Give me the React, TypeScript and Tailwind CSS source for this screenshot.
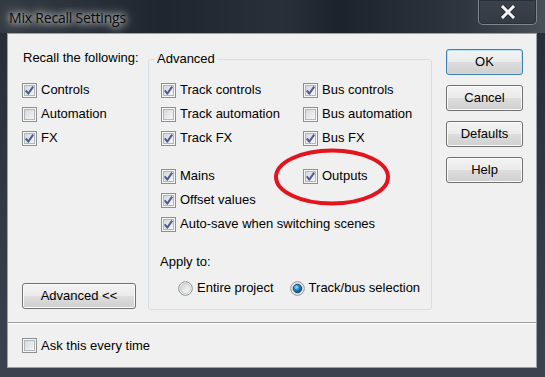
import React from 'react';

const CheckBox = ({ checked }: { checked: boolean }) => (
  <svg width="15" height="15" viewBox="0 0 15 15" className="shrink-0">
    <defs>
      <linearGradient id="cbInner" x1="0" y1="0" x2="1" y2="1">
        <stop offset="0%" stopColor="#d3d6db" />
        <stop offset="100%" stopColor="#f8f8f8" />
      </linearGradient>
    </defs>
    <rect x="0.5" y="0.5" width="14" height="14" fill="#f6f6f6" stroke="#8e8f8f" />
    <rect x="2.5" y="2.5" width="10" height="10" fill="url(#cbInner)" stroke="#b3b7bc" />
    {checked && (
      <path d="M3.8 7.4 L6.3 10.6 L11.2 3.6" fill="none" stroke="#4a5d95" strokeWidth="2" strokeLinejoin="round" />
    )}
  </svg>
);

const Radio = ({ selected }: { selected: boolean }) => (
  <svg width="15" height="15" viewBox="0 0 15 15" className="shrink-0">
    <defs>
      <linearGradient id="rdOuter" x1="0" y1="0" x2="1" y2="1">
        <stop offset="0%" stopColor="#cfd2d6" />
        <stop offset="100%" stopColor="#fafafa" />
      </linearGradient>
      <radialGradient id="rdDot" cx="0.38" cy="0.35" r="0.7">
        <stop offset="0%" stopColor="#a6e4ff" />
        <stop offset="45%" stopColor="#1f8ad3" />
        <stop offset="100%" stopColor="#0b3f73" />
      </radialGradient>
    </defs>
    <circle cx="7.5" cy="7.5" r="6.8" fill="#f4f4f4" stroke="#8e8f8f" />
    <circle cx="7.5" cy="7.5" r="5" fill="url(#rdOuter)" stroke="#c2c5c9" strokeWidth="0.8" />
    {selected && <circle cx="7.5" cy="7.5" r="4.2" fill="url(#rdDot)" stroke="#163a60" strokeWidth="0.8" />}
  </svg>
);

const Option = ({ checked, label, className = '' }: { checked: boolean; label: string; className?: string }) => (
  <div className={`flex items-center h-[24px] gap-[4px] whitespace-nowrap ${className}`}>
    <CheckBox checked={checked} />
    <span>{label}</span>
  </div>
);

const WinButton = ({ label, focused = false, className = '' }: { label: string; focused?: boolean; className?: string }) => (
  <button
    className={`h-[26px] rounded-[3px] border text-[13px] text-black bg-[linear-gradient(#f3f3f3_0%,#ebebeb_48%,#dddddd_52%,#cfcfcf_100%)] ${
      focused
        ? 'border-[#3c7fb1] shadow-[inset_0_0_0_1px_#b9e2f7]'
        : 'border-[#707070] shadow-[inset_0_0_0_1px_#fbfbfb]'
    } ${className}`}
  >
    {label}
  </button>
);

export default function App() {
  return (
    <div className="relative w-[545px] h-[377px] overflow-hidden flex flex-col bg-[linear-gradient(180deg,#252c35_0%,#323a44_60%,#3a434e_100%)] font-['Liberation_Sans',Arial,sans-serif] text-[13px] leading-[16px] text-black">
      {/* title bar */}
      <div className="h-[33px] shrink-0 flex items-start justify-between bg-[linear-gradient(90deg,#353b43_0%,#1f262f_30%,#283039_52%,#1c232c_62%,#2f363f_85%,#4a5159_100%)]">
        <span className="mt-[8px] ml-[9px] font-['Open_Sans',sans-serif] text-[14px] tracking-[-0.2px] leading-[20px] text-[#0a0a0a] [text-shadow:0_0_6px_#fff,0_0_12px_rgba(255,255,255,0.7),0_0_18px_rgba(255,255,255,0.45)]">
          Mix Recall Settings
        </span>
        <div className="mr-[8px] w-[59px] h-[25px] rounded-b-[5px] border border-t-0 border-[#7f868e] bg-[linear-gradient(#3b424b,#343b44)] shadow-[inset_0_0_0_1px_#2a3038] flex items-center justify-center">
          <svg width="16" height="14" viewBox="0 0 16 14">
            <path d="M3 2 L13 12 M13 2 L3 12" stroke="#2a2f36" strokeWidth="5" strokeLinecap="square" />
            <path d="M3 2 L13 12 M13 2 L3 12" stroke="#f4f4f4" strokeWidth="3" strokeLinecap="square" />
          </svg>
        </div>
      </div>

      {/* client */}
      <div className="ml-[7px] mr-[8px] mb-[9px] flex-1 flex flex-col border border-[#9aa1a8] bg-[#f0f0f0]">
        <div className="h-[288px] shrink-0 flex pl-[14px] pt-[16px] pb-[13px]">
          {/* recall column */}
          <div className="w-[114px] min-w-0 shrink-0 flex flex-col">
            <div className="pl-[1px] whitespace-nowrap">Recall the following:</div>
            <div className="mt-[12px]">
              <Option checked label="Controls" />
              <Option checked={false} label="Automation" />
              <Option checked label="FX" />
            </div>
            <WinButton label="Advanced <<" className="mt-auto w-[114px]" />
          </div>

          {/* advanced group */}
          <fieldset className="ml-[12px] w-[284px] min-w-0 h-[260px] shrink-0 border border-[#d5dfe5] rounded-[3px] px-[12px] pt-[10px]">
            <legend className="ml-[-6px] px-[2px] leading-[18px]">Advanced</legend>
            <div className="grid grid-cols-[142px_1fr]">
              <Option checked label="Track controls" />
              <Option checked label="Bus controls" />
              <Option checked={false} label="Track automation" />
              <Option checked={false} label="Bus automation" />
              <Option checked label="Track FX" />
              <Option checked label="Bus FX" />
            </div>
            <div className="grid grid-cols-[142px_1fr] mt-[14px]">
              <Option checked label="Mains" />
              <Option checked label="Outputs" />
            </div>
            <Option checked label="Offset values" />
            <Option checked label="Auto-save when switching scenes" />
            <div className="mt-[18px] ml-[-1px]">Apply to:</div>
            <div className="mt-[6px] ml-[17px] flex items-center h-[24px] whitespace-nowrap">
              <Radio selected={false} />
              <span className="ml-[4px]">Entire project</span>
              <span className="ml-[16px] flex">
                <Radio selected />
              </span>
              <span className="ml-[4px]">Track/bus selection</span>
            </div>
          </fieldset>

          {/* buttons */}
          <div className="ml-[14px] mt-[-1px] w-[77px] shrink-0 flex flex-col gap-[10px]">
            <WinButton label="OK" focused />
            <WinButton label="Cancel" />
            <WinButton label="Defaults" />
            <WinButton label="Help" />
          </div>
        </div>

        <div className="border-t border-[#a0a0a0] border-b border-b-white" />

        <div className="flex-1 flex items-center pl-[14px]">
          <Option checked={false} label="Ask this every time" />
        </div>
      </div>

      {/* red annotation ellipse */}
      <svg className="absolute left-[273px] top-[148px] pointer-events-none" width="118" height="58" viewBox="0 0 118 58">
        <ellipse cx="59" cy="29" rx="56" ry="26.5" fill="none" stroke="#e3141d" strokeWidth="4" />
      </svg>
    </div>
  );
}
